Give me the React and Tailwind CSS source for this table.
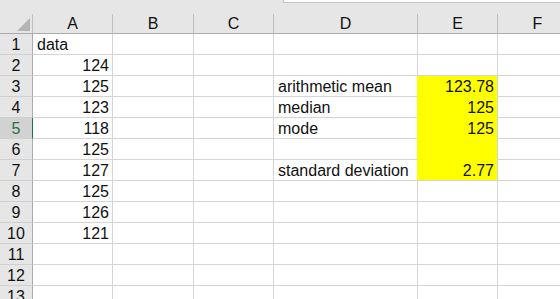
import React from "react";

const cols = [
  { key: "A", w: "w-[80px]" },
  { key: "B", w: "w-[81px]" },
  { key: "C", w: "w-[80px]" },
  { key: "D", w: "w-[144px]" },
  { key: "E", w: "w-[80px]" },
  { key: "F", w: "w-[80px]" },
];

const colA = ["data", "124", "125", "123", "118", "125", "127", "125", "126", "121", "", "", ""];
const labels = { 3: "arithmetic mean", 4: "median", 5: "mode", 7: "standard deviation" };
const values = { 3: "123.78", 4: "125", 5: "125", 7: "2.77" };

const Cell = ({ w, children, right, yellow, yellowBottom, yellowRight }) => (
  <div
    className={`${w} shrink-0 h-full flex items-center pt-[2px] border-b border-r ${
      yellow ? "bg-[#ffff00]" : "bg-white"
    } ${yellowBottom ? "border-b-[#ffff00]" : "border-b-[#d4d4d4]"} ${
      yellowRight ? "border-r-[#ffff00]" : "border-r-[#d4d4d4]"
    } ${right ? "justify-end pr-[3px]" : "pl-[4px]"} whitespace-nowrap`}
  >
    {children}
  </div>
);

export default function App() {
  const rows = Array.from({ length: 13 }, (_, i) => i + 1);

  return (
    <div className="w-[560px] h-[299px] overflow-hidden bg-white text-[16px] text-[#111] font-['Liberation_Sans',Arial,sans-serif]">
      {/* formula bar edge */}
      <div className="h-[14px] bg-[#e6e6e6] flex">
        <div className="w-[283px] shrink-0" />
        <div className="flex-1 h-[3px] bg-white border-b border-l border-[#c6c6c6]" />
      </div>

      {/* column headers */}
      <div className="flex h-[20px] bg-[#e6e6e6] border-b border-[#ababab]">
        <div className="w-[33px] shrink-0 border-r border-[#c0c0c0] relative">
          <svg className="absolute left-[17px] top-[4px]" width="13" height="13" viewBox="0 0 13 13">
            <polygon points="13,0 13,13 0,13" fill="#b4b4b4" />
          </svg>
        </div>
        {cols.map((c) => (
          <div
            key={c.key}
            className={`${c.w} shrink-0 flex items-center justify-center pt-[1px] border-r border-[#c0c0c0] leading-none`}
          >
            {c.key}
          </div>
        ))}
      </div>

      {/* rows */}
      {rows.map((r) => {
        const sel = r === 5;
        const yel = r >= 3 && r <= 7;
        return (
          <div key={r} className="flex h-[21px]">
            <div
              className={`w-[33px] shrink-0 flex items-center justify-center pt-[2px] border-b border-b-[#d0d0d0] border-r ${
                sel
                  ? "bg-[#d2d2d2] text-[#217346] border-r-[#217346]"
                  : "bg-[#e6e6e6] border-r-[#ababab]"
              }`}
            >
              {r}
            </div>
            <Cell w="w-[80px]" right={r > 1}>
              {colA[r - 1]}
            </Cell>
            <Cell w="w-[81px]" />
            <Cell w="w-[80px]" />
            <Cell w="w-[144px]" yellowRight={yel}>
              {labels[r] || ""}
            </Cell>
            <Cell w="w-[80px]" right yellow={yel} yellowBottom={yel && r < 7}>
              {values[r] || ""}
            </Cell>
            <Cell w="w-[80px]" />
          </div>
        );
      })}
    </div>
  );
}
